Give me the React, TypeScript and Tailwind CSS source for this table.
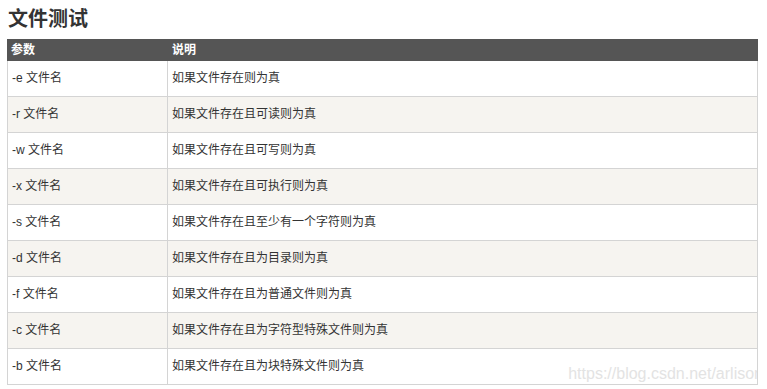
import React from "react";

const rows: [string, string][] = [
  ["-e 文件名", "如果文件存在则为真"],
  ["-r 文件名", "如果文件存在且可读则为真"],
  ["-w 文件名", "如果文件存在且可写则为真"],
  ["-x 文件名", "如果文件存在且可执行则为真"],
  ["-s 文件名", "如果文件存在且至少有一个字符则为真"],
  ["-d 文件名", "如果文件存在且为目录则为真"],
  ["-f 文件名", "如果文件存在且为普通文件则为真"],
  ["-c 文件名", "如果文件存在且为字符型特殊文件则为真"],
  ["-b 文件名", "如果文件存在且为块特殊文件则为真"],
];

export default function App() {
  return (
    <div
      className="relative w-[767px] h-[389px] overflow-hidden bg-white text-[#333]"
      style={{ fontFamily: '"Liberation Sans", "Noto Sans CJK SC", sans-serif' }}
    >
      <h2 className="pl-[8px] pt-[5px] h-[39px] text-[20px] leading-[28px] font-bold text-[#333]">
        文件测试
      </h2>
      <div className="ml-[7px] w-[751px]">
        <div className="grid grid-cols-[161px_1fr] h-[22px] bg-[#555] text-white text-[12px] font-bold leading-[22px]">
          <div className="pl-[4px]">参数</div>
          <div className="pl-[4px]">说明</div>
        </div>
        <div className="border-l border-r border-[#d4d4d4]">
          {rows.map(([a, b], i) => (
            <div
              key={i}
              className={
                "grid grid-cols-[160px_1fr] h-[36px] border-b border-[#d4d4d4] text-[12px] leading-[35px] " +
                (i % 2 === 1 ? "bg-[#f6f4f0]" : "bg-white")
              }
            >
              <div className="pl-[4px] border-r border-[#d4d4d4]">{a}</div>
              <div className="pl-[4px]">{b}</div>
            </div>
          ))}
        </div>
      </div>
      <div className="absolute left-[0px] top-[364px] w-[757px] overflow-hidden flex justify-end pointer-events-none">
        <span className="whitespace-nowrap text-[16px] leading-[20px] text-[#e3e3e3] mr-[-6px]">
          https://blog.csdn.net/arlison
        </span>
      </div>
    </div>
  );
}
